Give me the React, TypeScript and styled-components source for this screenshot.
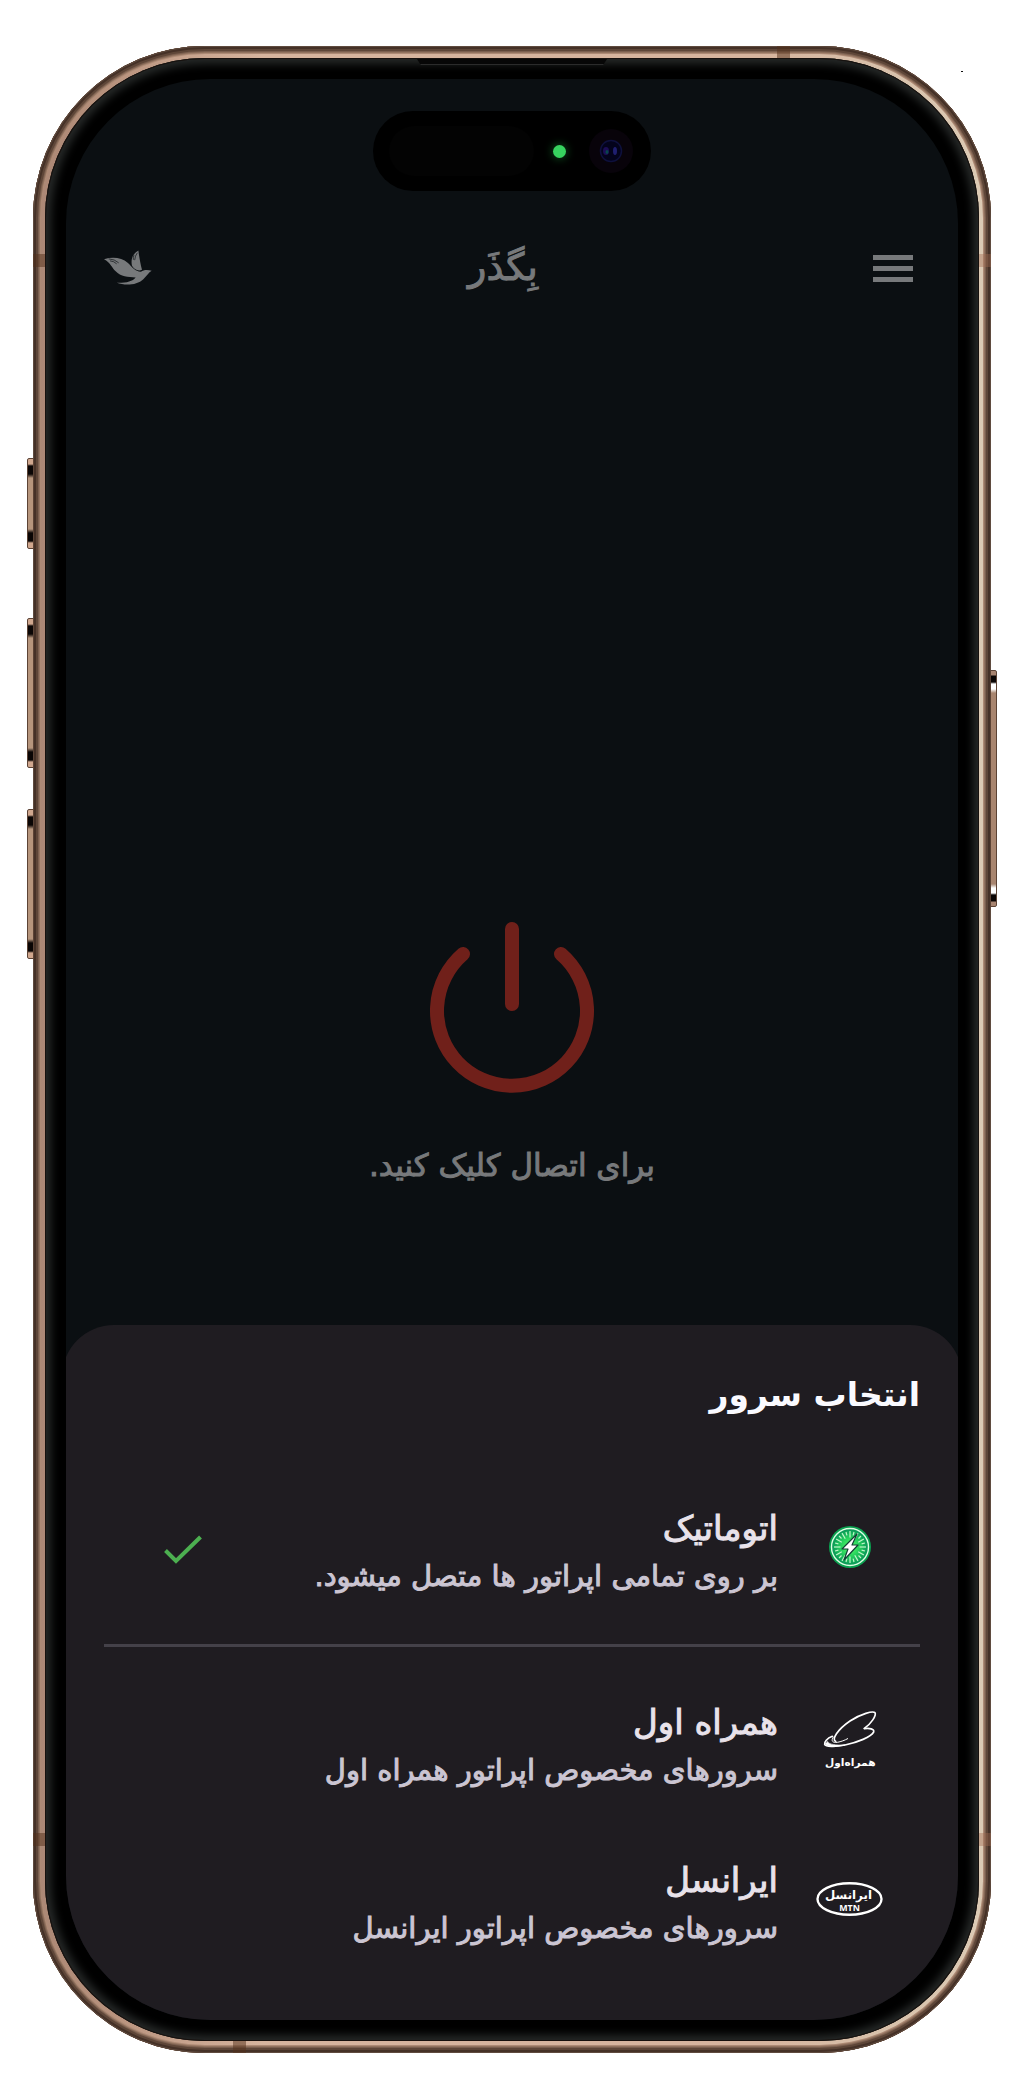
import React, { useState } from "react";
import styled, { createGlobalStyle, css } from "styled-components";

const GlobalStyle = createGlobalStyle`
  * { box-sizing: border-box; }
  body { margin: 0; background: #fff; }
  body, button, input { font-family: "DejaVu Sans", sans-serif; }
`;

const Page = styled.div`
  position: relative;
  padding: 46px 33px;
`;

const Speck = styled.i`
  position: absolute;
  top: 71px;
  right: 61px;
  width: 2px;
  height: 1px;
  background: #111;
`;

const Phone = styled.div`
  position: relative;
  padding: 12px;
  border-radius: 172px;
  background: linear-gradient(to right, #aa8775 0, #b8927d 8%, #d6b49e 24%, #d6b49e 76%, #d9c4ae 92%, #dccbb5 100%);
  box-shadow: inset 0 0 0 1px #5f4b3f, inset 0 0 0 3px #453127, inset 0 0 0 5px #5e4638,
    inset 0 0 0 6px #7b5f4f, inset 0 0 0 7px #92735f, inset 0 0 0 8px #ad8a75;
`;

const Bezel = styled.div`
  position: relative;
  padding: 21px;
  border-radius: 160px;
  background: #000;
  box-shadow: inset 0 0 0 1px #17110e, inset 0 0 8px 6px #262928;
`;

const sideKey = css`
  position: absolute;
  width: 7px;
  border: 1px solid #5c4335;
`;

const LeftKey = styled.i<{ $top: number; $height: number }>`
  ${sideKey}
  left: -6px;
  top: ${(p) => p.$top}px;
  height: ${(p) => p.$height}px;
  border-radius: 2px 0 0 2px;
  background: linear-gradient(to bottom, #d0a78e 0 5px, #0a0504 7px 15px, #b6957c 19px calc(100% - 19px), #0a0504 calc(100% - 15px) calc(100% - 7px), #d0a78e calc(100% - 5px));
`;

const RightKey = styled.i`
  ${sideKey}
  right: -6px;
  top: 624px;
  height: 237px;
  border-radius: 0 2px 2px 0;
  background: linear-gradient(to bottom, #a88470 0 4px, #0a0504 5px 11px, #fff 13px 18px, #a8856f 22px calc(100% - 22px), #fff calc(100% - 18px) calc(100% - 13px), #0a0504 calc(100% - 11px) calc(100% - 5px), #a88470 calc(100% - 4px));
`;

const Band = styled.i<{ $side: "left" | "right" | "top" | "bottom"; $at: number }>`
  position: absolute;
  background: ${(p) => (p.$side === "right" ? "rgba(160,104,80,.4)" : "rgba(84,48,26,.5)")};
  ${(p) => p.$side}: 0;
  ${(p) =>
    p.$side === "left" || p.$side === "right"
      ? css`top: ${p.$at}px; width: 12px; height: 13px;`
      : css`left: ${p.$at}px; width: 13px; height: 12px;`}
`;

const Earpiece = styled.i`
  position: absolute;
  top: 1px;
  left: 50%;
  width: 190px;
  height: 6px;
  margin-left: -95px;
  background: #070707;
  border-bottom: 1px solid #2b2b2b;
  clip-path: polygon(0 0, 100% 0, 98% 100%, 2% 100%);
`;

const Screen = styled.main`
  position: relative;
  display: flex;
  flex-direction: column;
  padding-top: 32px;
  overflow: hidden;
  border-radius: 144px;
  background: #0b0f12;
`;

const Island = styled.div`
  display: flex;
  align-items: center;
  align-self: center;
  width: 278px;
  height: 80px;
  padding: 0 18px 0 16px;
  border-radius: 40px;
  background: #000;
`;

const Sensor = styled.i`
  flex: 1;
  height: 50px;
  border-radius: 25px;
  background: #030303;
`;

const GreenLight = styled.i`
  width: 13px;
  height: 13px;
  margin: 0 23px 0 19px;
  border-radius: 50%;
  background: #37d35f;
  box-shadow: 0 0 9px 1px #0d4a1c;
`;

const Camera = styled.svg`
  width: 44px;
  height: 44px;
`;

const Header = styled.header`
  display: flex;
  align-items: center;
  justify-content: space-between;
  margin-top: 44px;
  padding: 0 38px 0 37px;
  height: 64px;
`;

const IconButton = styled.button`
  display: flex;
  padding: 0;
  border: 0;
  background: none;
  color: #77797b;
  cursor: pointer;
`;

const MenuButton = styled(IconButton)`
  padding: 12px 7px 12px 20px;
`;

const AppName = styled.h1`
  margin: 0;
  font-size: 38px;
  font-weight: 400;
  line-height: 64px;
  color: #77797b;
  -webkit-text-stroke: 1px;
`;

const Hero = styled.section`
  display: flex;
  flex-direction: column;
  align-items: center;
  justify-content: flex-end;
  gap: 48px;
  min-height: 1026px;
  padding-bottom: 137px;
`;

const Hint = styled.p`
  margin: 0;
  font-size: 31px;
  line-height: 46px;
  color: #77797b;
  -webkit-text-stroke: 1px;
`;

const Sheet = styled.section`
  margin: 0 -4px;
  padding: 34px 42px 42px;
  border-radius: 52px 52px 0 0;
  background: #1f1c21;
`;

const SheetTitle = styled.h2`
  margin: 0 0 37px;
  font-size: 33px;
  font-weight: 700;
  line-height: 72px;
  color: #fafaff;
`;

const Options = styled.div`
  display: flex;
  flex-direction: column;
`;

const Option = styled.label`
  display: flex;
  align-items: center;
  height: 158px;
  padding: 0 37px 0 60px;
  cursor: pointer;
`;

const Radio = styled.input`
  appearance: none;
  width: 0;
  height: 0;
  margin: 0;
`;

const OptionIcon = styled.span`
  display: flex;
  justify-content: center;
  width: 67px;
  margin-left: 38px;
`;

const OptionText = styled.span`
  display: flex;
  flex: 1;
  flex-direction: column;
  gap: 2px;
  padding-top: 10px;
  line-height: 46px;
  -webkit-text-stroke: 1px;
`;

const OptionName = styled.span`
  font-size: 34px;
  color: #e8e2ea;
`;

const OptionNote = styled.span`
  font-size: 29px;
  color: #cbc5d2;
`;

const Divider = styled.hr`
  width: 100%;
  height: 3px;
  margin: 18px 0 15px;
  border: 0;
  background: #444149;
`;

const Bird = () => (
  <svg width="50" height="37" viewBox="245 655 150 110" fill="currentColor" aria-hidden="true">
    <path d="M248 685C274 677 302 680 319 696C333 709 341 722 359 723C367 716 381 717 391 720C382 725 376 736 366 745C347 763 313 765 286 756C312 757 334 752 343 740C320 737 298 738 283 721C272 711 267 694 248 685Z" />
    <path d="M351 659C354 680 357 698 362 717C350 722 337 715 332 705C328 687 333 670 348 661Z" />
    <path d="M262 684Q280 685 292 696M266 690Q278 691 286 699M348 666Q341 675 340 688M338 672Q335 680 336 687" fill="none" stroke="#0b0f12" strokeWidth="2" />
  </svg>
);

const Menu = () => (
  <svg width="40" height="40" viewBox="0 0 40 40" stroke="currentColor" strokeWidth="5" aria-hidden="true">
    <path d="M0 10.5H40M0 21.5H40M0 32.5H40" />
  </svg>
);

const Power = () => (
  <svg width="164" height="172" viewBox="0 0 164 172" fill="none" stroke="#70201a" strokeWidth="14" strokeLinecap="round" aria-hidden="true">
    <path d="M82 7V82M33 32A75 75 0 1 0 131 32" />
  </svg>
);

const Check = () => (
  <svg width="38" height="36" viewBox="0 -6 38 36" fill="none" stroke="#4caf50" strokeWidth="4" aria-hidden="true">
    <path d="M1.5 15.5L12 26L36.5 2" />
  </svg>
);

const rays = Array.from({ length: 24 }, (_, i) => i * 15);

const AutoIcon = () => (
  <svg width="44" height="44" viewBox="-22 -22 44 44" aria-hidden="true">
    <defs>
      <radialGradient id="glow">
        <stop offset="0" stopColor="#5cff6a" />
        <stop offset=".5" stopColor="#26d15d" />
        <stop offset="1" stopColor="#079257" />
      </radialGradient>
    </defs>
    <circle r="21" fill="#0aa150" />
    <circle r="18.5" fill="url(#glow)" stroke="#dcffe2" strokeWidth="1.4" />
    {rays.map((a, i) => (
      <path key={a} d={i % 2 ? "M0 -15.5V-12" : "M0 -16V-9.5"} stroke="#bff7c8" strokeWidth="1.2" transform={`rotate(${a})`} />
    ))}
    <path d="M7 -13L-8 2H-2L-6 13L8 -2H2Z" fill="#fff" stroke="#123f35" strokeWidth="1.2" strokeLinejoin="round" />
  </svg>
);

const HamrahIcon = () => (
  <svg width="58" height="64" viewBox="180 90 174 192" fill="none" stroke="#fff" strokeLinecap="round" aria-hidden="true">
    <path d="M224 187C211 182 229 152 267 126C300 104 336 95 342 101C347 109 330 135 310 148" strokeWidth="5" />
    <path d="M310 149C325 146 341 150 338 159C330 174 290 190 252 198C221 205 194 203 191 196C189 189 198 178 214 172" strokeWidth="5" />
    <path d="M217 174C209 185 214 192 229 190C240 188 251 184 260 179" strokeWidth="3" />
    <path d="M192 194C201 204 230 203 252 198C225 199 203 197 200 188Z" fill="#fff" strokeWidth="2" />
    <text x="268" y="262" textAnchor="middle" fontFamily="DejaVu Sans, sans-serif" fontSize="32" fontWeight="700" fill="#fff" stroke="none">
      همراه‌اول
    </text>
  </svg>
);

const IrancellIcon = () => (
  <svg width="68" height="36" viewBox="0 0 68 36" fontFamily="DejaVu Sans, sans-serif" fontWeight="700" fill="#fff" textAnchor="middle" aria-hidden="true">
    <ellipse cx="34" cy="18" rx="32.5" ry="16" fill="none" stroke="#fff" strokeWidth="2.4" />
    <text x="33" y="18" fontSize="12">ایرانسل</text>
    <text x="34" y="30" fontSize="9" fontFamily="Open Sans, sans-serif">MTN</text>
  </svg>
);

const servers = [
  { id: "auto", name: "اتوماتیک", note: "بر روی تمامی اپراتور ها متصل میشود.", Icon: AutoIcon },
  { id: "hamrah", name: "همراه اول", note: "سرورهای مخصوص اپراتور همراه اول", Icon: HamrahIcon },
  { id: "irancell", name: "ایرانسل", note: "سرورهای مخصوص اپراتور ایرانسل", Icon: IrancellIcon },
];

export default function App() {
  const [selected, setSelected] = useState("auto");
  return (
    <>
      <GlobalStyle />
      <Page>
        <Speck />
        <Phone>
          <LeftKey $top={412} $height={91} />
          <LeftKey $top={572} $height={150} />
          <LeftKey $top={763} $height={150} />
          <RightKey />
          <Band $side="left" $at={208} />
          <Band $side="left" $at={1787} />
          <Band $side="right" $at={208} />
          <Band $side="right" $at={1787} />
          <Band $side="top" $at={744} />
          <Band $side="bottom" $at={200} />
          <Bezel>
            <Earpiece />
            <Screen>
              <Island>
                <Sensor />
                <GreenLight />
                <Camera viewBox="0 0 44 44" aria-hidden="true">
                  <circle cx="22" cy="22" r="22" fill="#08030a" />
                  <circle cx="22" cy="22" r="10.5" fill="#03031c" stroke="#0e103c" strokeWidth="1.5" />
                  <ellipse cx="17" cy="22" rx="3" ry="4" fill="#1c0d55" />
                  <ellipse cx="18" cy="23" rx="1.5" ry="2" fill="#07464c" />
                  <ellipse cx="26" cy="22" rx="2" ry="4" fill="#1f1f70" />
                </Camera>
              </Island>
              <Header>
                <IconButton type="button" aria-label="بِگذَر">
                  <Bird />
                </IconButton>
                <AppName dir="rtl">بِگذَر</AppName>
                <MenuButton type="button" aria-label="منو">
                  <Menu />
                </MenuButton>
              </Header>
              <Hero>
                <IconButton type="button" aria-label="اتصال">
                  <Power />
                </IconButton>
                <Hint dir="rtl">برای اتصال کلیک کنید.</Hint>
              </Hero>
              <Sheet dir="rtl">
                <SheetTitle>انتخاب سرور</SheetTitle>
                <Options role="radiogroup" aria-label="انتخاب سرور">
                  {servers.map(({ id, name, note, Icon }, i) => (
                    <React.Fragment key={id}>
                      {i === 1 && <Divider />}
                      <Option>
                        <Radio type="radio" name="server" value={id} checked={selected === id} onChange={() => setSelected(id)} />
                        <OptionIcon>
                          <Icon />
                        </OptionIcon>
                        <OptionText>
                          <OptionName>{name}</OptionName>
                          <OptionNote>{note}</OptionNote>
                        </OptionText>
                        {selected === id && <Check />}
                      </Option>
                    </React.Fragment>
                  ))}
                </Options>
              </Sheet>
            </Screen>
          </Bezel>
        </Phone>
      </Page>
    </>
  );
}
